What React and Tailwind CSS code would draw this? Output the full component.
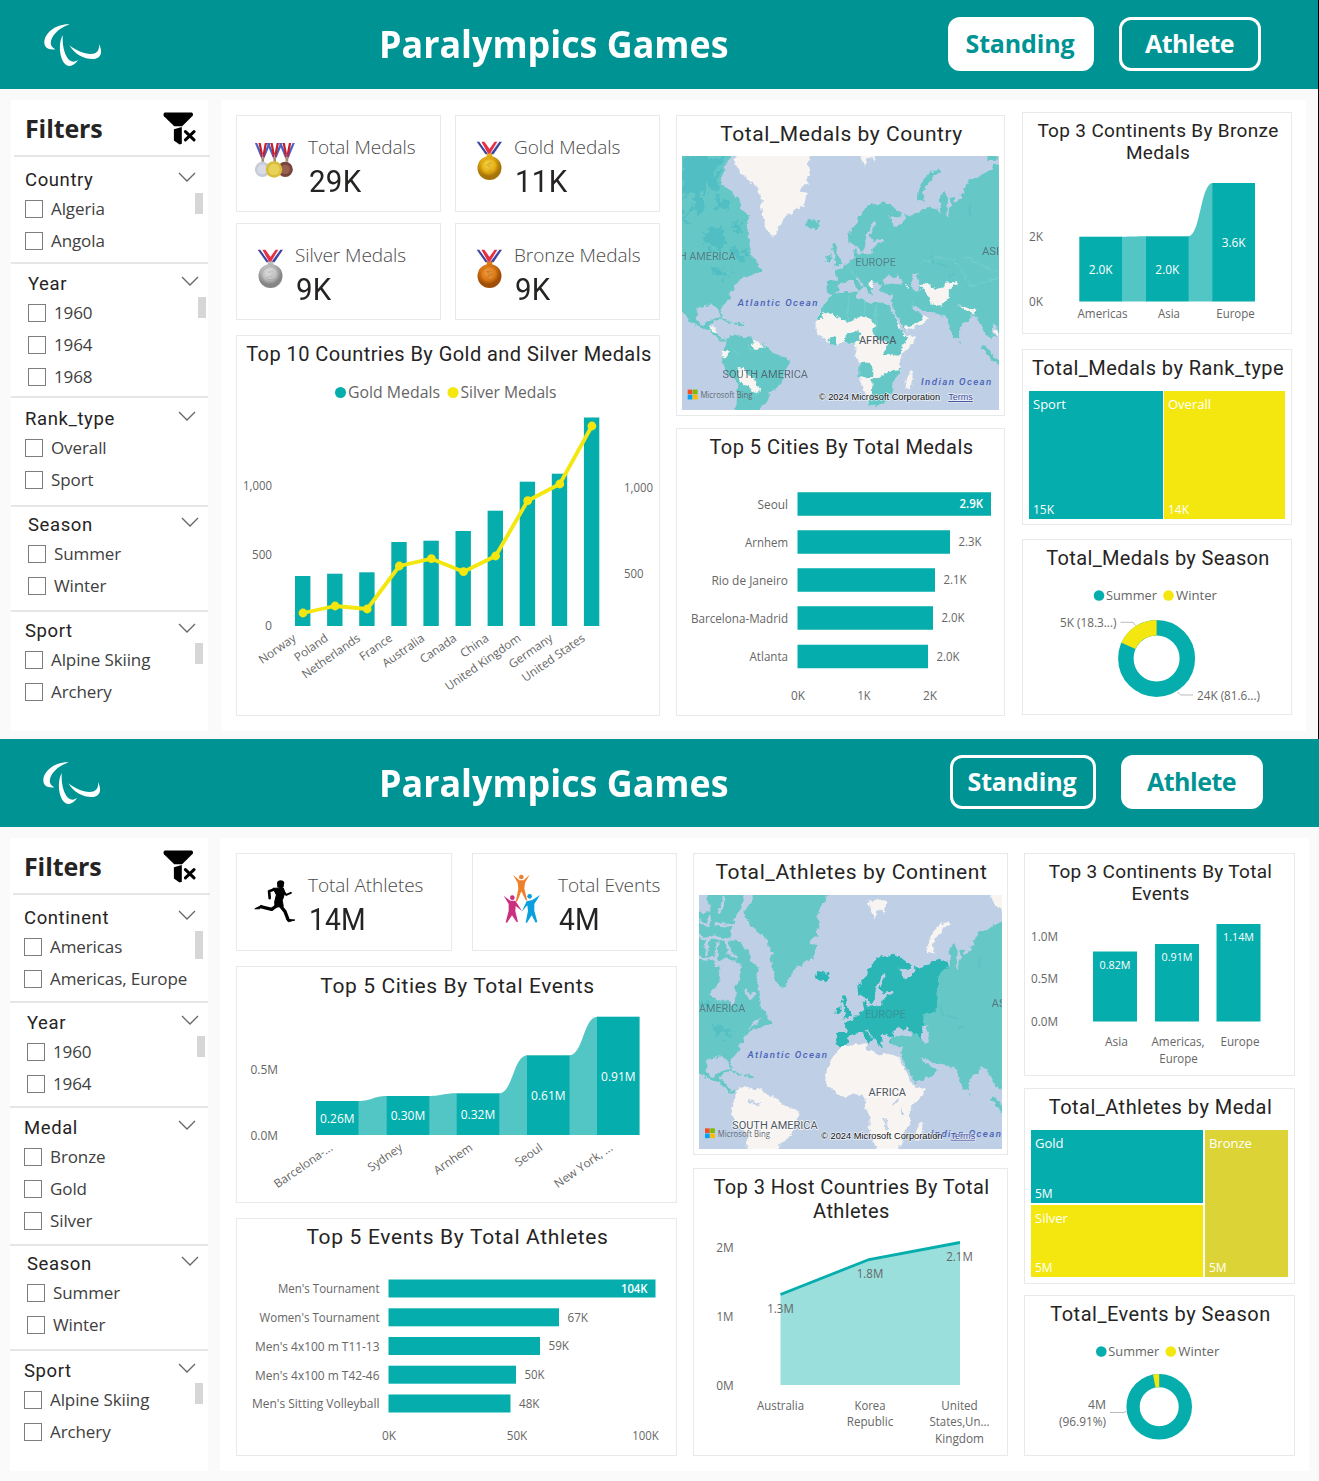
import React from "react";

const TEAL = "#05adad";
const RIBBON = "#52c5c5";
const YELLOW = "#f3e70f";

/* ---------- shared pieces ---------- */

// Chart text: `c` is the vertical centre, `w` the fitted width.
function T({ x, c, w, size = 12, anchor = "middle", fill = "#666", weight = 400, children, rotate }) {
  return (
    <text
      x={x}
      y={c + size * 0.36}
      fontSize={size}
      fontWeight={weight}
      fill={fill}
      textAnchor={anchor}
      textLength={w}
      lengthAdjust={w ? "spacingAndGlyphs" : undefined}
      transform={rotate ? `rotate(${rotate} ${x} ${c})` : undefined}
    >
      {children}
    </text>
  );
}

function Card({ className, title, titleClass = "h-9 text-[20px] tracking-[0.45px]", children }) {
  return (
    <div className={`flex flex-col border border-[#e9e9e9] bg-white ${className}`}>
      <h2
        className={`flex shrink-0 items-center justify-center whitespace-nowrap pl-[2px] text-center font-[Roboto,sans-serif] text-[#252423] ${titleClass}`}
      >
        {title}
      </h2>
      {children}
    </div>
  );
}

function Chart({ box, children }) {
  return (
    <svg viewBox={box} className="block min-h-0 w-full flex-1">
      {children}
    </svg>
  );
}

function Kpi({ className, icon, gap, label, value, valueClass = "tracking-[0.3px] scale-x-95" }) {
  return (
    <div className={`flex border border-[#e9e9e9] bg-white ${className}`}>
      {icon}
      <div className={gap}>
        <div className="whitespace-nowrap pt-[19px] text-[19px] font-light leading-6 tracking-[-0.05px] text-[#4a4a4a]">{label}</div>
        <div className={`ml-px mt-[5px] origin-left font-[Roboto,sans-serif] text-[31px] leading-[36px] text-[#252423] ${valueClass}`}>{value}</div>
      </div>
    </div>
  );
}

/* ---------- icons ---------- */

function Agitos() {
  return (
    <svg viewBox="132 71 173 128" className="ml-[44px] h-[43px] w-[58px]" fill="#fff">
      <path d="M208 72C168 70 133 98 133 126C133 143 148 149 166 146C151 138 149 128 156 113C165 93 185 80 208 72Z" />
      <path d="M188 104C176 125 177 160 188 181C200 203 219 201 235 177C223 187 209 185 201 171C191 154 186 131 188 104Z" />
      <path d="M208 134C222 162 258 178 283 175C304 171 307 151 296 131C298 149 290 160 271 160C250 159 228 150 208 134Z" />
    </svg>
  );
}

function ClearFilter() {
  return (
    <svg viewBox="490 334 100 99" className="mt-px h-[33px] w-[33px]">
      <path d="M495 335H577Q583 337 580 345L548 377H524L493 346Q489 339 495 335Z" />
      <path d="M523 386L547 379V430L540 432L523 420Z" />
      <path d="M558 393L584 418M584 393L558 418" stroke="#000" strokeWidth="9" strokeLinecap="round" />
    </svg>
  );
}

function Medal({ id, light, mid, dark, num }) {
  return (
    <svg viewBox="768 126 80 118" className="mt-[25px] h-[40px] w-[27px]">
      <defs>
        <radialGradient id={id} cx="45%" cy="35%">
          <stop offset="0" stopColor={light} />
          <stop offset="0.6" stopColor={mid} />
          <stop offset="1" stopColor={dark} />
        </radialGradient>
      </defs>
      <path d="M770 128H778L806 165H796Z" fill="#3b45a0" />
      <path d="M778 128H785L812 165H804Z" fill="#fff" />
      <path d="M784 128H793L817 162L806 168Z" fill="#e53044" />
      <path d="M845 128H837L808 165H820Z" fill="#3b45a0" />
      <path d="M837 128H831L806 163H812Z" fill="#e8e8f8" />
      <path d="M831 128H823L803 156L809 164Z" fill="#e53044" />
      <rect x="800" y="163" width="16" height="12" fill={mid} />
      <circle cx="808" cy="206" r="35.5" fill={`url(#${id})`} />
      <circle cx="808" cy="204" r="26" fill="none" stroke={dark} strokeWidth="2" opacity="0.5" />
      <text x="808" y="216" fontSize="33" fontWeight="700" textAnchor="middle" fill={light} stroke={dark} strokeWidth="1">
        {num}
      </text>
    </svg>
  );
}

function Ribbon({ x }) {
  return (
    <g>
      <path d={`M${x - 24} 129h7l19 44h-8zM${x + 24} 129h-7l-19 44h8z`} fill="#4a63c8" />
      <path d={`M${x - 13} 129h7l9 48h-7zM${x + 13} 129h-7l-9 48h7z`} fill="#c5202c" />
      <path d={`M${x - 4} 172h8v14h-8z`} fill="#a98a78" />
    </g>
  );
}

function ThreeMedals() {
  return (
    <svg viewBox="104 126 126 112" className="mt-[26px] h-[37px] w-[42px]">
      <Ribbon x={130} />
      <Ribbon x={203} />
      <Ribbon x={166} />
      <circle cx="129" cy="209" r="23" fill="#c9cbd8" />
      <circle cx="129" cy="209" r="15" fill="#d9dbe6" />
      <circle cx="198" cy="209" r="23" fill="#76453c" />
      <circle cx="198" cy="209" r="14" fill="#98604f" />
      <circle cx="164" cy="209" r="25" fill="#d9bd3c" />
      <circle cx="164" cy="209" r="17" fill="#e9d25a" />
    </svg>
  );
}

function Runner() {
  return (
    <svg viewBox="102 122 126 130" className="mt-[26px] h-[43px] w-[42px]" fill="none" stroke="#000" strokeLinejoin="round" strokeLinecap="round">
      <path d="M171 131C172 121 190 120 193 130L191 143L184 148L172 144Z" fill="#000" stroke="none" />
      <path d="M160 147L190 146L195 160L187 184L190 202L165 204L164 188L169 168Z" fill="#000" strokeWidth="3" />
      <path d="M162 151L147 156L149 177" strokeWidth="8" />
      <path d="M190 156L199 167L213 161" strokeWidth="6" />
      <path d="M171 199L155 211L124 203" strokeWidth="10" />
      <path d="M124 199L104 209L118 209Z" fill="#000" strokeWidth="3" />
      <path d="M181 200L195 217L204 240" strokeWidth="10" />
      <path d="M202 241L225 243L206 248Z" fill="#000" strokeWidth="3" />
    </svg>
  );
}

function Team() {
  return (
    <svg viewBox="850 102 112 150" className="mt-[20px] h-[50px] w-[38px]">
      <g fill="#f07f2b">
        <circle cx="904" cy="111" r="7" />
        <path d="M879 104L898 121H911L929 104L915 128L913 146L922 182L917 180L904 154L892 184L887 186L895 146L893 128Z" />
      </g>
      <g fill="#cb2f7f">
        <circle cx="877" cy="173" r="7" />
        <path d="M851 167L871 182H886L906 213L887 198L886 214L894 246L889 245L876 226L861 248L857 247L866 212L866 192Z" />
      </g>
      <g fill="#0ba0dd">
        <circle cx="929" cy="169" r="7" />
        <path d="M960 165L943 192L943 212L952 246L947 248L935 226L921 248L917 248L924 212L922 196L905 215L920 184L937 180Z" />
      </g>
    </svg>
  );
}

/* ---------- world map ---------- */

const SEA = "#bfd0e6";
const LAND = "#f8f4f2";
const SHADE = "#65c8c6";
const DEEP = "#2bb6b5";

const P = {
  america:
    "M20 100L200 100L185 169L166 192L162 215L153 240L157 258L172 265L183 276L194 290L205 298L212 325L222 338L238 352L230 366L229 385L236 400L236 430L244 452L247 470L258 481L262 500L276 506L275 520L258 518L240 528L222 530L206 540L196 556L192 566L180 574L178 592L165 611L153 622L151 630L158 645L158 655L150 646L143 622L128 617L108 616L86 622L80 634L80 652L90 671L104 675L112 668L118 658L132 658L124 674L120 684L134 686L142 698L140 708L152 716L165 712L166 720L150 722L136 712L118 690L104 688L80 678L58 662L44 640L20 610Z",
  greenland:
    "M222 110L440 110L434 150L417 175L414 205L420 222L410 235L412 255L398 258L390 275L410 280L400 318L380 326L362 342L340 352L334 372L322 388L318 404L305 408L296 400L288 384L278 350L272 318L280 308L270 296L262 265L250 250L240 247L225 228L210 222L190 180L215 155Z",
  iceland: "M404 366L412 370L414 360L428 364L444 360L449 374L434 388L412 384Z",
  eurasia:
    "M470 580L468 560L471 543L498 543L502 528L490 515L506 508L520 500L530 490L545 478L552 470L547 452L557 444L560 458L570 464L600 460L606 446L618 434L642 424L636 418L610 424L599 408L606 390L620 372L613 366L604 374L596 392L588 408L589 422L582 442L572 456L562 438L548 434L534 430L532 402L556 374L566 348L586 324L606 310L622 316L640 305L662 318L690 340L692 354L664 350L652 346L664 362L664 378L682 380L692 366L706 360L704 340L716 350L736 338L756 330L775 320L800 330L812 340L808 310L806 286L824 276L832 296L830 320L824 340L832 356L834 330L842 318L836 298L850 292L852 306L868 296L866 284L884 280L880 262L894 240L920 234L938 220L960 210L966 196L1010 190L1010 700L984 700L975 672L966 668L962 690L972 712L960 705L945 702L938 682L926 668L918 650L905 642L895 655L882 668L866 684L864 712L852 718L838 690L828 655L815 648L800 638L762 634L735 620L722 612L728 628L748 642L770 652L756 674L702 692L692 672L676 642L665 620L662 606L668 584L652 582L630 578L628 566L634 556L618 548L600 548L604 562L600 574L608 584L596 582L586 562L566 542L562 528L556 534L566 548L582 560L570 568L566 580L550 544L524 544L508 556L502 574L488 586Z",
  uk: "M486 500L500 498L515 492L510 478L502 470L498 450L500 438L488 432L482 448L492 466L490 480L498 484Z",
  ireland: "M466 486L468 470L480 460L484 472L480 484Z",
  novaya: "M740 300L738 285L748 262L760 236L786 214L810 206L812 216L790 230L770 252L757 276L762 304Z",
  africa:
    "M485 582L510 582L540 575L558 574L560 592L590 602L600 612L612 604L655 612L662 628L680 662L690 688L705 704L735 706L728 730L704 752L688 778L690 820L665 848L667 872L645 902L615 918L594 914L586 884L566 836L570 796L552 764L556 738L545 732L520 724L500 736L475 730L445 700L437 680L440 655L464 610Z",
  africaNorth:
    "M440 657L464 610L485 582L540 575L558 574L560 592L590 602L600 612L612 604L655 612L662 628L680 662L676 680L695 690L700 704L715 716L692 738L690 762L665 772L640 758L650 742L652 728L615 712L608 690L616 678L606 660L572 648L530 668L500 650L472 634L458 640L456 656Z",
  southAmerica:
    "M165 722L180 705L196 702L206 710L245 712L252 722L285 735L300 750L330 766L352 774L356 790L338 830L332 855L302 876L290 905L270 922L262 950L190 950L200 900L203 850L170 812L153 780L158 755L168 740Z",
  madagascar: "M703 846L708 824L724 810L729 824L718 864L708 866Z",
  svalbard: "M562 150L600 140L625 150L612 165L612 190L600 176L590 180L582 202L572 178Z",
};

function WorldMap({ box, continents, logo, credit }) {
  const base = continents ? LAND : SHADE;
  const id = continents ? "continents" : "countries";
  return (
    <svg viewBox={box} preserveAspectRatio="none" className="block min-h-0 flex-1" fontFamily="Roboto, sans-serif">
      <defs>
        <clipPath id={id}>
          <path d="M400 290L806 290L806 345L775 365L768 480L728 488L735 562L690 540L632 556L625 600L400 600Z" />
        </clipPath>
        <filter id={`${id}-coast`} filterUnits="userSpaceOnUse" x="0" y="90" width="1020" height="880">
          <feTurbulence type="fractalNoise" baseFrequency="0.06" numOctaves="3" seed="4" />
          <feDisplacementMap in="SourceGraphic" scale="17" xChannelSelector="R" yChannelSelector="G" />
        </filter>
        <filter id={`${id}-soft`} filterUnits="userSpaceOnUse" x="0" y="90" width="1020" height="880">
          <feTurbulence type="fractalNoise" baseFrequency="0.05" numOctaves="3" seed="9" />
          <feDisplacementMap in="SourceGraphic" scale="60" xChannelSelector="R" yChannelSelector="G" />
          <feGaussianBlur stdDeviation="2" />
        </filter>
      </defs>
      <rect x="0" y="100" width="1100" height="900" fill={SEA} />
      <g filter={`url(#${id}-coast)`}>
        <path d={P.america} fill={SHADE} />
        {continents ? (
          <g fill={SEA} stroke={SEA}>
            <path d="M92 420L120 385L122 350L112 330L136 318L162 326L184 340L178 382L166 398L168 436L160 456L152 448L118 444L96 436Z" />
            <path d="M40 245L78 262L100 255L130 262L165 262M57 205L85 222L92 190M105 215L165 222M130 130L128 160L118 185M112 268L108 318M57 318L80 322L108 318L112 345M85 262L78 310M140 262L148 300L175 318M195 410L212 440L222 420" fill="none" strokeWidth="9" strokeLinejoin="bevel" />
            <path d="M40 100L82 100L84 150L88 175L70 185L40 165ZM160 238L178 262L222 318L245 350L260 250L190 190L172 210Z" />
            <path d="M206 528L225 508L244 500L232 518Z" />
          </g>
        ) : null}
        <path d={P.greenland} fill={continents ? SHADE : LAND} />
        <path d={P.eurasia} fill={SHADE} />
        <path d={P.iceland + P.uk + P.ireland} fill={continents ? DEEP : SHADE} />
        {continents && <path d={P.eurasia} fill={DEEP} clipPath={`url(#${id})`} />}
        <path d={P.novaya} fill={base} />
        <path d={P.svalbard} fill={LAND} />
        {continents && <path d="M925 120L980 120L980 185L945 160Z" fill={LAND} />}
        {!continents && <path d="M948 160L980 160L976 184L950 184Z" fill={SHADE} />}
        <path d="M635 548L640 534L654 526L664 534L680 526L694 542L690 554L664 550L640 556Z" fill={SEA} />
        <path d="M728 522L744 520L738 534L748 552L746 574L734 578L728 560L720 542Z" fill={SEA} />
        <path d={P.africa} fill={LAND} />
        <path d={P.southAmerica} fill={base} />
        <path d={P.madagascar} fill={LAND} />
        <path d="M132 660L148 654L170 662L184 670M192 670L222 673" stroke={SHADE} strokeWidth="6" fill="none" />
        <path d="M934 738L950 752L966 776L990 790" stroke={SHADE} strokeWidth="12" fill="none" />
        <path d="M864 722L870 726L868 732Z" fill={SHADE} />
        {!continents && (
          <g>
            <path d={P.africaNorth} fill={SHADE} />
            <path d="M475 712L497 710L497 734L475 732ZM526 700L545 694L572 698L566 718L548 734L524 724ZM566 786L590 784L608 794L608 830L566 832ZM606 838L640 826L656 812L688 806L690 820L665 848L667 872L645 902L615 918L594 914L590 894L604 884ZM640 760L650 740L692 738L690 762L672 772Z" fill={SHADE} />
            <path d="M648 768L670 764L684 780L686 802L664 806L652 790Z" fill={LAND} />
            <path d="M746 560L770 548L790 566L812 568L824 548L858 544L858 552L834 568L834 592L812 616L782 614L780 590ZM864 614L896 626L914 628L912 640L890 634ZM700 680L735 672L752 660L758 644L772 652L756 674L704 692ZM702 554L714 560L712 568ZM592 546L602 542L606 560L598 562ZM118 682L138 682L142 700L128 696ZM965 690L985 692L975 705Z" fill={LAND} />
            <path d="M245 718L262 722L284 738L270 746L250 746ZM202 800L222 804L228 820L246 826L256 852L270 862L264 880L250 876L238 856L208 846L208 824ZM155 750L176 756L176 766L162 776L153 768Z" fill={LAND} />
            <path d="M535 585L530 665M582 600L584 645M615 615L617 700M530 500L560 530M720 600L740 625M748 490L800 470L850 480L870 510M870 510L900 560L984 530M880 470L984 520M230 720L245 760M180 740L215 770M260 880L240 900" stroke="#86d6d4" strokeWidth="1.5" fill="none" />
          </g>
        )}
        {continents && (
          <path d="M612 795Q618 812 618 835M640 755L655 745M662 770L668 790M205 745L240 760" stroke={SEA} strokeWidth="5" fill="none" />
        )}
      </g>
      {!continents && (
        <g fill="#45b9c2" opacity="0.6" filter="url(#countries-soft)">
          <path d="M36 169L165 169L140 215L145 260L125 270L110 255L90 300L60 280L36 300Z" />
          <path d="M70 290L95 280L105 320L85 340L65 325ZM135 285L165 300L170 335L145 330ZM40 330L50 335L46 375L36 370ZM180 370L215 365L205 400L190 390Z" />
          <path d="M98 395L125 385L162 395L165 435L140 448L112 438L96 420Z" />
          <path d="M185 440L210 445L230 485L205 482L192 465ZM115 500L160 510L180 528L160 540L125 518Z" />
        </g>
      )}
      {continents && (
        <path d="M95 545L120 550L150 570L165 560L140 585L110 570ZM60 470L90 480L70 490Z" fill="#45b9c2" opacity="0.5" filter="url(#continents-soft)" transform="translate(0 -30)" />
      )}
      <path d="M900 316Q890 330 900 350M850 525Q835 520 835 535M780 465L790 495M800 490L830 500" stroke="#4fbcc3" strokeWidth="6" fill="none" opacity="0.4" />

      <g fontSize="33" fill="#4c5560" strokeLinejoin="round">
        <text x="196" y="479" textAnchor="end" textLength="252" lengthAdjust="spacingAndGlyphs" opacity="0.65">NORTH AMERICA</text>
        <text x="554" y="497" textLength="122" lengthAdjust="spacingAndGlyphs" opacity={continents ? 0.35 : 0.6}>EUROPE</text>
        <text x="933" y="466" textLength="74" lengthAdjust="spacingAndGlyphs" opacity="0.7">ASIA</text>
        <text x="565" y="732" textLength="112" lengthAdjust="spacingAndGlyphs" stroke={continents ? "#fff" : "none"} strokeWidth="4" paintOrder="stroke">AFRICA</text>
        <text x="157" y="832" textLength="256" lengthAdjust="spacingAndGlyphs" stroke={continents ? "#fff" : "none"} strokeWidth="4" paintOrder="stroke" opacity={continents ? 1 : 0.8}>SOUTH AMERICA</text>
      </g>
      <g fontSize="29" fontStyle="italic" fontWeight="500" fill="#4b62b8">
        <text x="203" y="618" textLength="238">Atlantic Ocean</text>
        <text x="751" y="854" textLength="210">Indian Ocean</text>
      </g>
      <g transform={`translate(${logo})`}>
        <path d="M0 0h14v14h-14z" fill="#f25022" />
        <path d="M15.500 0h14v14h-14z" fill="#7fba00" />
        <path d="M0 15.500h14v14h-14z" fill="#00a4ef" />
        <path d="M15.500 15.500h14v14h-14z" fill="#ffb900" />
        <text x="38" y="25" fontSize="27" fontFamily="Open Sans, sans-serif" fill="#5f6b75" textLength="156" lengthAdjust="spacingAndGlyphs">Microsoft Bing</text>
      </g>
      <g transform={`translate(${credit})`} fontFamily="Liberation Sans, sans-serif" fontSize="28" stroke="#fff" strokeOpacity="0.7" strokeWidth="4" paintOrder="stroke">
        <text x="0" y="0" fill="#111" textLength="363" lengthAdjust="spacingAndGlyphs">© 2024 Microsoft Corporation</text>
        <text x="387" y="0" fill="#3b4a9c" textDecoration="underline" textLength="74" lengthAdjust="spacingAndGlyphs">Terms</text>
      </g>
    </svg>
  );
}

/* ---------- charts ---------- */

const COUNTRIES = [
  ["Norway", 576, 613],
  ["Poland", 573.7, 606],
  ["Netherlands", 572.3, 609],
  ["France", 542, 566],
  ["Australia", 540.7, 558.7],
  ["Canada", 531, 571.7],
  ["China", 510.7, 556],
  ["United Kingdom", 481.7, 500.7],
  ["Germany", 473.7, 484],
  ["United States", 417.5, 426],
];

function ComboChart() {
  const cx = (i) => 303 + i * 32.1;
  return (
    <Chart box="237 372 422 343">
      <circle cx="340.500" cy="392.500" r="5.500" fill={TEAL} />
      <T x={348} c={392} w={92} size={17} anchor="start">Gold Medals</T>
      <circle cx="453" cy="392.500" r="5.500" fill={YELLOW} />
      <T x={460.5} c={392} w={96} size={17} anchor="start">Silver Medals</T>
      <T x={272} c={485.500} w={29} anchor="end">1,000</T>
      <T x={272} c={555} w={20} anchor="end">500</T>
      <T x={272} c={626} w={7} anchor="end">0</T>
      <T x={624} c={488} w={29} anchor="start">1,000</T>
      <T x={624} c={574} w={19.500} anchor="start">500</T>
      {COUNTRIES.map(([name, top], i) => (
        <g key={name}>
          <rect x={cx(i) - 8} y={top} width="15.400" height={626 - top} fill={TEAL} />
          <T x={cx(i) - 8.5} c={636.5} size={11.8} anchor="end" rotate={-35}>{name}</T>
        </g>
      ))}
      <polyline points={COUNTRIES.map(([, , y], i) => `${cx(i)},${y}`).join(" ")} fill="none" stroke={YELLOW} strokeWidth="3.800" strokeLinejoin="round" />
      {COUNTRIES.map(([name, , y], i) => (
        <circle key={name} cx={cx(i)} cy={y} r="4.400" fill={YELLOW} />
      ))}
    </Chart>
  );
}

function BarRows({ rows, x0, height, labelX }) {
  return rows.map(([name, nameW, c, x1, value, valueW], i) => (
    <g key={name}>
      <T x={labelX} c={c + 0.5} w={nameW} anchor="end">{name}</T>
      <rect x={x0} y={c - height / 2} width={x1 - x0} height={height} fill={TEAL} />
      {i === 0 ? (
        <T x={x1 - 8} c={c} w={valueW} anchor="end" fill="#fff" weight={600}>{value}</T>
      ) : (
        <T x={x1 + 8.500} c={c} w={valueW} anchor="start">{value}</T>
      )}
    </g>
  ));
}

function RibbonChart({ bars, base, width }) {
  return (
    <g>
      {bars.slice(0, -1).map(([x, top], i) => {
        const [nx, ntop] = bars[i + 1];
        const x0 = x + width;
        const m = (x0 + nx) / 2;
        return <path key={x} d={`M${x0 - 0.5} ${top}C${m} ${top} ${m} ${ntop} ${nx + 0.5} ${ntop}V${base}H${x0 - 0.5}Z`} fill={RIBBON} />;
      })}
      {bars.map(([x, top, label, w]) => (
        <g key={x}>
          <rect x={x} y={top} width={width} height={base - top} fill={TEAL} />
          <T x={x + width / 2} c={(top + base) / 2 + 0.5} w={w} fill="#fff" weight={500}>{label}</T>
        </g>
      ))}
    </g>
  );
}

function Donut({ cx, cy, r, inner, share }) {
  const mid = (r + inner) / 2;
  return (
    <g fill="none" strokeWidth={r - inner} transform={`rotate(-90 ${cx} ${cy})`}>
      <circle cx={cx} cy={cy} r={mid} stroke={TEAL} />
      <circle cx={cx} cy={cy} r={mid} stroke={YELLOW} pathLength="100" strokeDasharray={`${share} 100`} strokeDashoffset={share - 100} />
    </g>
  );
}

function SeasonLegend({ x, y }) {
  return (
    <g>
      <circle cx={x} cy={y} r="5.300" fill={TEAL} />
      <T x={x + 7} c={y} w={51} size={13.5} anchor="start">Summer</T>
      <circle cx={x + 69.5} cy={y} r="5.300" fill={YELLOW} />
      <T x={x + 77} c={y} w={41} size={13.5} anchor="start">Winter</T>
    </g>
  );
}

function Tile({ className, name, value }) {
  return (
    <div className={`flex flex-col justify-between pl-[4px] pr-1 pt-[3px] text-white ${className}`}>
      <span className="text-[13px] leading-5">{name}</span>
      <span className="text-[12px] font-medium leading-[18px]">{value}</span>
    </div>
  );
}

/* ---------- sidebar ---------- */

function Slicer({ title, items, className, thumb }) {
  return (
    <section className={`relative border-b-2 border-[#e6e6e6] last:border-b-0 ${className}`}>
      <div className="flex h-7 items-center justify-between">
        <h3 className="pt-[3px] font-[Roboto,sans-serif] text-[18.5px] tracking-[0.6px] text-[#252423]">{title}</h3>
        <svg viewBox="0 0 18 10" className="-mt-1 h-[10px] w-[18px]" fill="none" stroke="#666" strokeWidth="1.300">
          <path d="M1 1L9 9L17 1" />
        </svg>
      </div>
      {items.map((item) => (
        <div key={item} className="flex h-8 items-center">
          <span className="h-[18px] w-[18px] border border-[#7d7d7d]" />
          <span className="ml-[8px] whitespace-nowrap text-[17px] tracking-[-0.1px] text-[#404040]">{item}</span>
        </div>
      ))}
      {thumb && <span className={`absolute w-[8px] bg-[#d6d6d6] ${thumb}`} />}
    </section>
  );
}

function Sidebar({ className, head, slicers }) {
  return (
    <aside className={`shrink-0 bg-white ${className}`}>
      <div className={`flex items-center justify-between border-b-2 border-[#e6e6e6] ${head}`}>
        <h2 className="pt-[3px] text-[25px] font-bold tracking-[-0.1px] text-[#252423]">Filters</h2>
        <ClearFilter />
      </div>
      {slicers.map((s) => (
        <Slicer key={s.title} {...s} />
      ))}
    </aside>
  );
}

function Header({ className, active, logo, buttons }) {
  const on = "bg-white text-[#009394]";
  const off = "bg-transparent text-white";
  return (
    <header className={`flex bg-[#009394] ${className}`}>
      <div className={`w-[379px] ${logo}`}>
        <Agitos />
      </div>
      <h1 className="mr-px flex h-[87px] w-[348px] origin-left scale-x-[0.943] items-center whitespace-nowrap text-[38px] font-bold text-white">Paralympics Games</h1>
      <nav className={`flex gap-[25px] ${buttons}`}>
        <button className={`h-[54px] w-[146px] rounded-[12px] border-[3px] border-white pr-[2px] text-[25px] font-bold tracking-[-0.15px] ${active === "Standing" ? on : off}`}>Standing</button>
        <button className={`h-[54px] w-[142px] rounded-[12px] border-[3px] border-white pr-[1px] text-[25px] font-bold tracking-[-0.5px] ${active === "Athlete" ? on : off}`}>Athlete</button>
      </nav>
    </header>
  );
}

/* ---------- boards ---------- */

function StandingBoard() {
  return (
    <div className="h-[739px] border-r border-black bg-[#fafafa]">
      <Header className="h-[89px]" active="Standing" logo="pt-[24px]" buttons="ml-[220px] pt-[17px]" />
      <div className="flex gap-[13px] pl-[11px] pt-[11px]">
        <Sidebar
          className="h-[631px] w-[197px]"
          head="-mr-[2px] ml-[3px] h-[57px] pl-[11px] pr-[14px]"
          slicers={[
            { title: "Country", items: ["Algeria", "Angola"], className: "h-[107px] pl-[14px] pr-[12px] pt-[8px]", thumb: "right-[5px] top-[36px] h-[21px]" },
            { title: "Year", items: ["1960", "1964", "1968"], className: "h-[134px] pl-[17px] pr-[9px] pt-[5px]", thumb: "right-[2px] top-[33px] h-[21px]" },
            { title: "Rank_type", items: ["Overall", "Sport"], className: "h-[109px] pl-[14px] pr-[12px] pt-[6px]" },
            { title: "Season", items: ["Summer", "Winter"], className: "h-[105px] pl-[17px] pr-[9px] pt-[3px]" },
            { title: "Sport", items: ["Alpine Skiing", "Archery"], className: "h-[118px] pl-[14px] pr-[12px] pt-[4px]", thumb: "right-[5px] top-[31px] h-[21px]" },
          ]}
        />
        <main className="flex h-[631px] w-[1085px] bg-white pl-[15px]">
          <div className="w-[424px] pt-[15px]">
            <div className="grid grid-cols-[205px_205px] gap-x-[14px] gap-y-[11px]">
              <Kpi className="h-[97px] pl-[17px]" icon={<ThreeMedals />} gap="ml-[12px]" label="Total Medals" value="29K" />
              <Kpi className="h-[97px] pl-[20px]" icon={<Medal id="gold" light="#f6d84a" mid="#e5ae12" dark="#a67408" num="1" />} gap="ml-[11px]" label="Gold Medals" value="11K" />
              <Kpi className="h-[97px] pl-[20px]" icon={<Medal id="silver" light="#e6e6e6" mid="#bdbdbd" dark="#858585" num="2" />} gap="ml-[11px]" label="Silver Medals" value="9K" />
              <Kpi className="h-[97px] pl-[20px]" icon={<Medal id="bronze" light="#f3a24a" mid="#dd7a14" dark="#a04d08" num="3" />} gap="ml-[11px]" label="Bronze Medals" value="9K" />
            </div>
            <Card className="mt-[15px] h-[381px]" title="Top 10 Countries By Gold and Silver Medals">
              <ComboChart />
            </Card>
          </div>

          <div className="ml-[16px] w-[329px] pt-[15px]">
            <Card className="h-[301px] px-[5px] pb-[5px]" title="Total_Medals by Country" titleClass="h-10 pb-[2px] text-[21px] tracking-[0.55px]">
              <WorldMap box="36 169 948 760" logo="53 868" credit="445 899" />
            </Card>
            <Card className="mt-[12px] h-[288px]" title="Top 5 Cities By Total Medals">
              <Chart box="677 465 327 250">
                <BarRows
                  x0={797.5}
                  labelX={788}
                  height={23.5}
                  rows={[
                    ["Seoul", 30.5, 504, 991, "2.9K", 23.5],
                    ["Arnhem", 43, 542, 950, "2.3K", 23],
                    ["Rio de Janeiro", 76.5, 580, 935, "2.1K", 23],
                    ["Barcelona-Madrid", 97, 618, 933, "2.0K", 23],
                    ["Atlanta", 38.5, 656.5, 928, "2.0K", 23],
                  ]}
                />
                <T x={798} c={695.5} w={14}>0K</T>
                <T x={864} c={695.5} w={13}>1K</T>
                <T x={930} c={695.5} w={14}>2K</T>
              </Chart>
            </Card>
          </div>

          <div className="ml-[17px] w-[270px] pt-[12px]">
            <Card
              className="h-[222px]"
              title={<>Top 3 Continents By Bronze<br />Medals</>}
              titleClass="h-[58px] text-[19px] leading-[22px] tracking-[0.33px]"
            >
              <Chart box="1023 171 268 162">
                <RibbonChart
                  base={301.5}
                  width={42.7}
                  bars={[
                    [1079.3, 236.7, "2.0K", 24],
                    [1146, 236.3, "2.0K", 24],
                    [1212.3, 183, "3.6K", 24],
                  ]}
                />
                <T x={1029} c={237} w={14} anchor="start">2K</T>
                <T x={1029} c={301.5} w={14} anchor="start">0K</T>
                <T x={1102.5} c={314} w={50}>Americas</T>
                <T x={1169} c={314} w={22}>Asia</T>
                <T x={1235.5} c={314} w={38.5}>Europe</T>
              </Chart>
            </Card>
            <Card className="mt-[15px] h-[176px]" title="Total_Medals by Rank_type" titleClass="h-[41px] pb-[5px] text-[20px] tracking-[0.45px]">
              <div className="mx-[6px] flex h-[128px] gap-[1px]">
                <Tile className="w-[134px] bg-[#05adad]" name="Sport" value="15K" />
                <Tile className="flex-1 bg-[#f3e70f]" name="Overall" value="14K" />
              </div>
            </Card>
            <Card className="mt-[14px] h-[176px]" title="Total_Medals by Season" titleClass="h-9 text-[20px] tracking-[0.35px]">
              <Chart box="1023 576 268 138">
                <SeasonLegend x={1099} y={595.5} />
                <Donut cx={1156.6} cy={658.4} r={38.5} inner={23} share={18.3} />
                <path d="M1120.500 622.300H1133L1135.500 625.500M1177.500 692L1180.500 695H1193" stroke="#bbb" fill="none" />
                <T x={1060} c={622.5} w={56.5} anchor="start">5K (18.3...)</T>
                <T x={1197} c={695.5} w={63} anchor="start">24K (81.6...)</T>
              </Chart>
            </Card>
          </div>
        </main>
      </div>
    </div>
  );
}

function AthleteBoard() {
  return (
    <div className="h-[742px] bg-[#fafafa]">
      <Header className="h-[88px]" active="Athlete" logo="-ml-[1px] mr-[1px] pt-[23px]" buttons="ml-[222px] pt-[16px]" />
      <div className="flex gap-[12px] pl-[10px] pt-[11px]">
        <Sidebar
          className="h-[633px] w-[198px]"
          head="-mr-[2px] ml-[3px] h-[57px] pl-[11px] pr-[14px]"
          slicers={[
            { title: "Continent", items: ["Americas", "Americas, Europe"], className: "h-[108px] pl-[14px] pr-[12px] pt-[8px]", thumb: "right-[5px] top-[36px] h-[28px]" },
            { title: "Year", items: ["1960", "1964"], className: "h-[105px] pl-[17px] pr-[9px] pt-[5px]", thumb: "right-[3px] top-[33px] h-[21px]" },
            { title: "Medal", items: ["Bronze", "Gold", "Silver"], className: "h-[138px] pl-[14px] pr-[12px] pt-[5px]" },
            { title: "Season", items: ["Summer", "Winter"], className: "h-[105px] pl-[17px] pr-[9px] pt-[3px]" },
            { title: "Sport", items: ["Alpine Skiing", "Archery"], className: "h-[118px] pl-[14px] pr-[12px] pt-[5px]", thumb: "right-[5px] top-[32px] h-[21px]" },
          ]}
        />
        <main className="flex h-[633px] w-[1089px] bg-white pl-[16px]">
          <div className="w-[441px] pt-[15px]">
            <div className="flex justify-between">
              <Kpi className="h-[98px] w-[216px] pl-[17px]" icon={<Runner />} gap="ml-[12px]" label="Total Athletes" value="14M" valueClass="tracking-[0.1px] scale-x-[0.91]" />
              <Kpi className="h-[98px] w-[205px] pl-[30px]" icon={<Team />} gap="ml-[17px]" label="Total Events" value="4M" valueClass="tracking-[0.1px] scale-x-[0.91]" />
            </div>
            <Card className="mt-[15px] h-[237px]" title="Top 5 Cities By Total Events" titleClass="h-9 pt-[3px] text-[21px] tracking-[0.6px]">
              <Chart box="237 1003 439 199">
                <RibbonChart
                  base={1135}
                  width={42.6}
                  bars={[
                    [316, 1101, "0.26M", 34.5],
                    [386.7, 1096, "0.30M", 34.5],
                    [456.7, 1093.3, "0.32M", 34.5],
                    [527, 1055.3, "0.61M", 34.5],
                    [597, 1016.7, "0.91M", 34.5],
                  ]}
                />
                <T x={250.5} c={1069.5} w={27.5} anchor="start">0.5M</T>
                <T x={250.5} c={1135.5} w={27.5} anchor="start">0.0M</T>
                {["Barcelona-...", "Sydney", "Arnhem", "Seoul", "New York, ..."].map((name, i) => (
                  <T key={name} x={331 + i * 70} c={1146} anchor="end" size={11.8} rotate={-35}>{name}</T>
                ))}
              </Chart>
            </Card>
            <Card className="mt-[15px] h-[238px]" title="Top 5 Events By Total Athletes" titleClass="h-9 pt-[2px] text-[21px] tracking-[0.68px]">
              <Chart box="237 1255 439 200">
                <BarRows
                  x0={388.5}
                  labelX={379.5}
                  height={18}
                  rows={[
                    ["Men's Tournament", 101.5, 1288.5, 655.5, "104K", 26.5],
                    ["Women's Tournament", 120, 1317.3, 559, "67K", 20.5],
                    ["Men's 4x100 m T11-13", 124.5, 1346, 540, "59K", 20.5],
                    ["Men's 4x100 m T42-46", 124.5, 1374.7, 516, "50K", 20],
                    ["Men's Sitting Volleyball", 127.5, 1403.5, 510.5, "48K", 20.5],
                  ]}
                />
                <T x={389} c={1435.5} w={14}>0K</T>
                <T x={517} c={1435.5} w={20.5}>50K</T>
                <T x={645.5} c={1435.5} w={26.5}>100K</T>
              </Chart>
            </Card>
          </div>

          <div className="ml-[16px] w-[315px] pt-[15px]">
            <Card className="h-[302px] px-[5px] pb-[5px]" title="Total_Athletes by Continent" titleClass="h-[41px] pb-[3px] text-[21px] tracking-[0.6px]">
              <WorldMap box="58 129 906 762" continents logo="76 829" credit="423 860" />
            </Card>
            <Card
              className="mt-[13px] h-[288px]"
              title={<>Top 3 Host Countries By Total<br />Athletes</>}
              titleClass="h-[60px] text-[20px] leading-[24px] tracking-[0.42px]"
            >
              <Chart box="694 1229 313 226">
                <path d="M780.500 1294.500L869 1259.500L960 1242.500V1385H780.500Z" fill="#9bdfdd" />
                <path d="M780.500 1294.500L869 1259.500L960 1242.500" fill="none" stroke={TEAL} strokeWidth="2.800" />
                <T x={725} c={1247.5} w={17.5}>2M</T>
                <T x={725} c={1316.5} w={17}>1M</T>
                <T x={725} c={1385.5} w={17.5}>0M</T>
                <T x={780.5} c={1308.5} w={26.5}>1.3M</T>
                <T x={870} c={1273.5} w={26.5}>1.8M</T>
                <T x={959.5} c={1256.5} w={26.5}>2.1M</T>
                <T x={780.5} c={1406} w={47}>Australia</T>
                <T x={870} c={1406} w={31}>Korea</T>
                <T x={870} c={1422} w={46.5}>Republic</T>
                <T x={959.5} c={1406} w={36.5}>United</T>
                <T x={959.5} c={1422} w={60}>States,Un...</T>
                <T x={959.5} c={1439} w={49}>Kingdom</T>
              </Chart>
            </Card>
          </div>

          <div className="ml-[16px] w-[271px] pt-[15px]">
            <Card
              className="h-[223px]"
              title={<>Top 3 Continents By Total<br />Events</>}
              titleClass="h-[58px] text-[19px] leading-[22px] tracking-[0.3px]"
            >
              <Chart box="1025 912 269 163">
                {[
                  [1093, 951.5, "0.82M", 965],
                  [1155, 944, "0.91M", 957],
                  [1216.5, 924, "1.14M", 937],
                ].map(([x, top, label, c]) => (
                  <g key={x}>
                    <rect x={x} y={top} width="44" height={1021.5 - top} fill={TEAL} />
                    <T x={x + 22} c={c} w={31} size={11.5} fill="#fff" weight={500}>{label}</T>
                  </g>
                ))}
                <T x={1044.5} c={937} w={27}>1.0M</T>
                <T x={1044.5} c={979} w={27}>0.5M</T>
                <T x={1044.5} c={1021.5} w={27}>0.0M</T>
                <T x={1116.5} c={1042} w={23}>Asia</T>
                <T x={1178} c={1042} w={53}>Americas,</T>
                <T x={1178.5} c={1058.5} w={38.5}>Europe</T>
                <T x={1240} c={1042} w={39}>Europe</T>
              </Chart>
            </Card>
            <Card className="mt-[12px] h-[196px]" title="Total_Athletes by Medal" titleClass="h-[41px] pb-[5px] text-[20px] tracking-[0.47px]">
              <div className="ml-[6px] grid h-[147px] w-[257px] grid-cols-[172px_83px] grid-rows-[73px_72px] gap-[2px]">
                <Tile className="bg-[#05adad]" name="Gold" value="5M" />
                <Tile className="row-span-2 bg-[#dcd436]" name="Bronze" value="5M" />
                <Tile className="bg-[#f3e70f]" name="Silver" value="5M" />
              </div>
            </Card>
            <Card className="mt-[11px] h-[161px]" title="Total_Events by Season" titleClass="h-9 pb-px text-[20px] tracking-[0.5px]">
              <Chart box="1025 1332 269 123">
                <SeasonLegend x={1101.3} y={1351.5} />
                <Donut cx={1159.2} cy={1406.7} r={32.8} inner={19.5} share={3.1} />
                <path d="M1110 1412.500H1123L1126.500 1411.500" stroke="#bbb" fill="none" />
                <T x={1106} c={1405} w={18} anchor="end">4M</T>
                <T x={1106} c={1421.5} w={47} anchor="end">(96.91%)</T>
              </Chart>
            </Card>
          </div>
        </main>
      </div>
    </div>
  );
}

export default function App() {
  return (
    <div className="w-[1319px] overflow-hidden font-['Open_Sans',sans-serif]">
      <StandingBoard />
      <AthleteBoard />
    </div>
  );
}
